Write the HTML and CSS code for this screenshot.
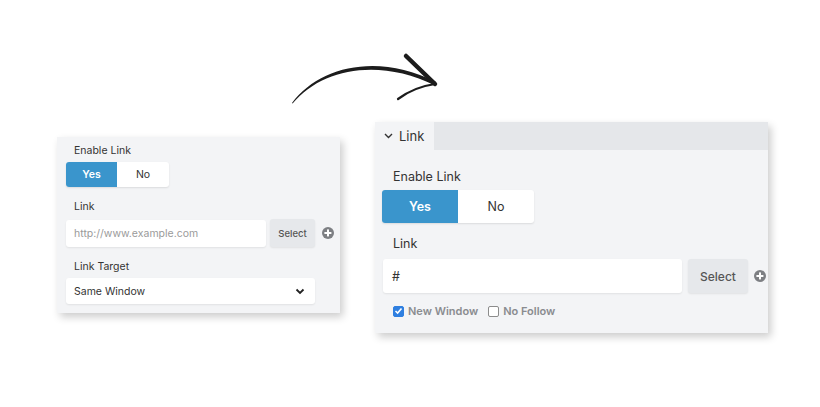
FILE: index.html
```html
<!DOCTYPE html>
<html lang="en">
<head>
    <meta charset="UTF-8">
    <meta name="viewport" content="width=device-width, initial-scale=1.0">
    <title>Link Settings</title>
    <link rel="stylesheet" href="styles.css">
</head>
<body>
    <div class="stage">
        <!-- hand drawn arrow between old and new -->
        <svg class="arrow" width="170" height="70" viewBox="0 0 170 70">
            <path d="M12 63 C 40 25, 100 13, 156 42 L 155 45.5 C 100 18, 42 28, 12.6 63.6 Z" fill="#1c1c1c"/>
            <path d="M126 16 L 155 44" stroke="#1c1c1c" stroke-width="4.5" stroke-linecap="round" fill="none"/>
            <path d="M155 44 Q 134 47, 118 59" stroke="#1c1c1c" stroke-width="2.2" stroke-linecap="round" fill="none"/>
        </svg>

        <!-- old panel -->
        <div class="panel panel-old">
            <div class="field-label">Enable Link</div>
            <div class="toggle">
                <span class="toggle-btn active">Yes</span>
                <span class="toggle-btn">No</span>
            </div>

            <div class="field-label spaced">Link</div>
            <div class="link-row">
                <div class="input placeholder">http://www.example.com</div>
                <div class="select-btn">Select</div>
                <span class="plus"></span>
            </div>

            <div class="field-label spaced">Link Target</div>
            <div class="dropdown">
                <span>Same Window</span>
                <svg width="10" height="7" viewBox="0 0 10 7"><path d="M1.5 1.5 L5 5 L8.5 1.5" stroke="#222" stroke-width="1.8" fill="none"/></svg>
            </div>
        </div>

        <!-- new panel -->
        <div class="panel panel-new">
            <div class="section-head">
                <div class="section-tab">
                    <svg width="9" height="6" viewBox="0 0 9 6"><path d="M1 1 L4.5 4.5 L8 1" stroke="#333" stroke-width="1.4" fill="none"/></svg>
                    <span>Link</span>
                </div>
            </div>
            <div class="section-body">
                <div class="field-label">Enable Link</div>
                <div class="toggle">
                    <span class="toggle-btn active">Yes</span>
                    <span class="toggle-btn">No</span>
                </div>

                <div class="field-label spaced">Link</div>
                <div class="link-row">
                    <div class="input">#</div>
                    <div class="select-btn">Select</div>
                    <span class="plus"></span>
                </div>

                <div class="checks">
                    <label class="check"><span class="box checked"><svg width="9" height="8" viewBox="0 0 9 8"><path d="M1.5 4 L3.6 6 L7.5 1.5" stroke="#fff" stroke-width="1.6" fill="none"/></svg></span>New Window</label>
                    <label class="check"><span class="box"></span>No Follow</label>
                </div>
            </div>
        </div>
    </div>
</body>
</html>
```

FILE: styles.css
```css
body {
    margin: 0;
    background: #fff;
    font-family: Inter, "Noto Sans", Arial, sans-serif;
    color: #333;
}

.stage {
    position: relative;
    width: 820px;
    height: 407px;
    display: flex;
    align-items: flex-start;
    padding-left: 57px;
    box-sizing: border-box;
}

.arrow {
    position: absolute;
    left: 280px;
    top: 40px;
}

.panel {
    background: #f3f4f6;
    box-shadow: 3px 4px 8px rgba(0, 0, 0, 0.2);
    box-sizing: border-box;
}

/* old panel */
.panel-old {
    margin-top: 137px;
    width: 283px;
    height: 176px;
    padding: 7px 9px 0;
}

.panel-old .field-label {
    font-size: 10.5px;
    line-height: 14px;
    padding-left: 8px;
    color: #333;
}

.panel-old .field-label.spaced {
    margin-top: 13px;
}

.panel-old .toggle {
    margin-top: 4px;
    height: 25px;
}

.panel-old .toggle-btn {
    width: 51px;
    font-size: 10.5px;
}

.panel-old .toggle-btn + .toggle-btn {
    width: 52px;
}

.panel-old .link-row {
    margin-top: 5px;
}

.panel-old .input {
    width: 200px;
    height: 27px;
    padding-left: 8px;
    font-size: 10.5px;
}

.panel-old .select-btn {
    width: 45px;
    height: 28px;
    margin-left: 4px;
    font-size: 9.5px;
}

.panel-old .plus {
    margin-left: 7px;
    width: 12px;
    height: 12px;
}

.dropdown {
    margin-top: 4px;
    width: 249px;
    height: 26px;
    background: #fff;
    border-radius: 3px;
    box-shadow: 0 1px 2px rgba(0, 0, 0, 0.08);
    display: flex;
    align-items: center;
    justify-content: space-between;
    padding: 0 10px 0 8px;
    box-sizing: border-box;
    font-size: 10.5px;
    color: #333;
}

/* shared controls */
.toggle {
    display: inline-flex;
    background: #fff;
    border-radius: 3px;
    box-shadow: 0 1px 2px rgba(0, 0, 0, 0.1);
    overflow: hidden;
}

.toggle-btn {
    display: flex;
    align-items: center;
    justify-content: center;
    color: #333;
}

.toggle-btn.active {
    background: #3a95cc;
    color: #fff;
    font-weight: 600;
}

.link-row {
    display: flex;
    align-items: center;
}

.input {
    flex: none;
    background: #fff;
    border-radius: 3px;
    box-shadow: 0 1px 2px rgba(0, 0, 0, 0.08);
    display: flex;
    align-items: center;
    box-sizing: border-box;
}

.input.placeholder {
    color: #9a9a9a;
}

.select-btn {
    flex: none;
    background: #e6e8eb;
    border-radius: 3px;
    box-shadow: 0 1px 2px rgba(0, 0, 0, 0.08);
    display: flex;
    align-items: center;
    justify-content: center;
    color: #555;
    font-weight: 500;
}

.plus {
    position: relative;
    border-radius: 50%;
    background: #7d7f83;
    flex: none;
}

.plus::before,
.plus::after {
    content: "";
    position: absolute;
    left: 50%;
    top: 50%;
    background: #fff;
    transform: translate(-50%, -50%);
}

.plus::before {
    width: 60%;
    height: 2px;
}

.plus::after {
    width: 2px;
    height: 60%;
}

/* new panel */
.panel-new {
    margin-top: 122px;
    margin-left: 35px;
    width: 393px;
    height: 211px;
}

.section-head {
    height: 28px;
    background: #e5e7ea;
    display: flex;
}

.section-tab {
    width: 59px;
    background: #f3f4f6;
    display: flex;
    align-items: center;
    gap: 6px;
    padding-left: 9px;
    box-sizing: border-box;
    font-size: 13px;
    color: #333;
}

.section-body {
    padding: 19px 0 0 7px;
}

.panel-new .field-label {
    font-size: 12.5px;
    line-height: 16px;
    padding-left: 11px;
}

.panel-new .field-label.spaced {
    margin-top: 13px;
}

.panel-new .toggle {
    margin-top: 5px;
    height: 33px;
}

.panel-new .toggle-btn {
    width: 76px;
    font-size: 12.5px;
}

.panel-new .link-row {
    margin-top: 7px;
    margin-left: 1px;
}

.panel-new .input {
    width: 299px;
    height: 34px;
    padding-left: 9px;
    font-size: 12.5px;
    color: #333;
}

.panel-new .select-btn {
    width: 60px;
    height: 34px;
    margin-left: 6px;
    font-size: 12px;
}

.panel-new .plus {
    margin-left: 6px;
    width: 12px;
    height: 12px;
}

.checks {
    display: flex;
    gap: 10px;
    margin-top: 11px;
    padding-left: 11px;
}

.check {
    display: flex;
    align-items: center;
    gap: 4px;
    font-size: 11px;
    font-weight: 600;
    color: #8a8c90;
}

.box {
    width: 11px;
    height: 11px;
    border: 1px solid #8c8c8c;
    border-radius: 2px;
    background: #fff;
    box-sizing: border-box;
    display: flex;
    align-items: center;
    justify-content: center;
}

.box.checked {
    background: #2f7fe0;
    border-color: #2f7fe0;
}
```
